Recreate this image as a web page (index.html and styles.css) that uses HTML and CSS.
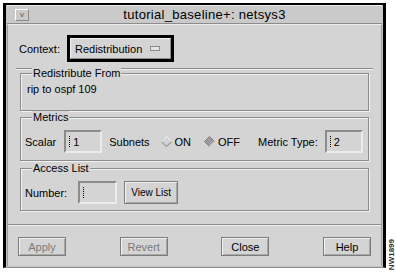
FILE: index.html
```html
<!DOCTYPE html>
<html>
    <head>
        <meta charset="utf-8" />
        <title>tutorial_baseline+: netsys3</title>
        <link rel="stylesheet" href="styles.css">
    </head>
    <body>
        <div class="screen">
            <div class="window">
                <div class="titlebar">
                    <span class="menu-btn">v</span>
                    <span class="title">tutorial_baseline+: netsys3</span>
                </div>
                <div class="panel">
                    <div class="context-row">
                        <span class="context-label">Context:</span>
                        <div class="option-frame">
                            <div class="option-btn">Redistribution <span class="indicator"></span></div>
                        </div>
                    </div>
                    <div class="sep sep-inset"></div>

                    <div class="group group-redist">
                        <span class="group-title">Redistribute From</span>
                        <div class="redist-text">rip to ospf 109</div>
                    </div>

                    <div class="group group-metrics">
                        <span class="group-title">Metrics</span>
                        <div class="row">
                            <span class="lbl">Scalar</span>
                            <span class="field field-scalar"><i class="caret"></i>1</span>
                            <span class="lbl lbl-subnets">Subnets</span>
                            <span class="radio">
                                <svg width="11" height="11" viewBox="0 0 11 11"><polygon points="5.5,0.5 10.5,5.5 5.5,10.5 0.5,5.5" fill="#d4d4d4" stroke="#a8a8a8" stroke-width="1.6"/><polyline points="0.5,5.5 5.5,0.5 10.5,5.5" fill="none" stroke="#f4f4f4" stroke-width="1.2"/></svg>
                                ON
                            </span>
                            <span class="radio radio-off">
                                <svg width="11" height="11" viewBox="0 0 11 11"><polygon points="5.5,0.5 10.5,5.5 5.5,10.5 0.5,5.5" fill="#9a9a9a" stroke="#7c7c7c" stroke-width="1"/><polyline points="5.5,10.5 10.5,5.5" fill="none" stroke="#c8c8c8" stroke-width="1.2"/></svg>
                                OFF
                            </span>
                            <span class="lbl lbl-metric">Metric Type:</span>
                            <span class="field field-metric"><i class="caret"></i>2</span>
                        </div>
                    </div>

                    <div class="group group-access">
                        <span class="group-title">Access List</span>
                        <div class="row">
                            <span class="lbl">Number:</span>
                            <span class="field field-number"><i class="caret"></i></span>
                            <span class="btn btn-view">View List</span>
                        </div>
                    </div>

                    <div class="sep sep-full"></div>

                    <div class="actions">
                        <span class="btn btn-action disabled">Apply</span>
                        <span class="btn btn-action disabled">Revert</span>
                        <span class="btn btn-action">Close</span>
                        <span class="btn btn-action">Help</span>
                    </div>
                </div>
            </div>
            <div class="side">
                <span class="tag">NW1899</span>
            </div>
        </div>
    </body>
</html>
```

FILE: styles.css
```css
html,
body {
    margin: 0;
    background-color: #ffffff;
    font-family: "Liberation Sans", Arial, sans-serif;
    font-size: 11px;
    color: #000000;
}
.screen {
    display: flex;
    width: 396px;
    height: 272px;
}
.window {
    margin: 3px 0 0 3px;
    width: 375px;
    height: 261px;
    padding: 0 1px 1px 1px;
    border-top: 2px solid #000000;
    border-left: 3px solid #000000;
    border-right: 3px solid #000000;
    border-bottom: 1px solid #8c8c8c;
    background-color: #c4c4c4;
    display: flex;
    flex-direction: column;
}
.titlebar {
    height: 17px;
    display: flex;
    align-items: center;
    padding-left: 8px;
    background-color: #cacaca;
    border-top: 1px solid #eeeeee;
    border-bottom: 1px solid #8c8c8c;
}
.menu-btn {
    width: 12px;
    height: 10px;
    border: 1px solid #ffffff;
    border-right-color: #8c8c8c;
    border-bottom-color: #8c8c8c;
    font-size: 8px;
    line-height: 9px;
    text-align: center;
    color: #555555;
}
.title {
    flex: 1;
    text-align: center;
    font-size: 13px;
    letter-spacing: 0.3px;
    padding-right: 2px;
}
.panel {
    flex: 1;
    background-color: #d4d4d4;
    border-top: 1px solid #eeeeee;
    border-left: 1px solid #9c9c9c;
    border-right: 1px solid #9c9c9c;
    display: flex;
    flex-direction: column;
}
.context-row {
    display: flex;
    align-items: center;
    margin-top: 10px;
    padding-left: 11px;
}
.context-label {
    width: 48px;
}
.option-frame {
    border: 3px solid #000000;
    padding: 0;
}
.option-btn {
    width: 95px;
    height: 19px;
    display: flex;
    align-items: center;
    padding-left: 4px;
    border: 1px solid #f2f2f2;
    border-right-color: #8c8c8c;
    border-bottom-color: #8c8c8c;
}
.indicator {
    width: 8px;
    height: 3px;
    margin-left: 8px;
    background-color: #e4e4e4;
    border: 1px solid #8c8c8c;
}
.sep {
    height: 0;
    border-top: 1px solid #8c8c8c;
    border-bottom: 1px solid #f2f2f2;
}
.sep-inset {
    margin: 6px 8px 0 8px;
}
.sep-full {
    margin-top: 13px;
}
.group {
    margin: 0 12px 0 12px;
    border: 1px solid #8c8c8c;
    box-shadow: inset 1px 1px #f2f2f2, 1px 1px #f2f2f2;
    padding: 0 4px;
}
.group-title {
    display: block;
    width: fit-content;
    margin: -7px 0 0 7px;
    padding: 0 1px;
    line-height: 12px;
    background-color: #d4d4d4;
}
.group-redist {
    margin-top: 3px;
    height: 36px;
}
.redist-text {
    margin-top: 4px;
    padding-left: 2px;
}
.group-metrics {
    margin-top: 6px;
    height: 42px;
}
.group-access {
    margin-top: 7px;
    height: 41px;
}
.row {
    display: flex;
    align-items: center;
    margin-top: 7px;
    height: 23px;
}
.field {
    box-sizing: border-box;
    height: 23px;
    display: flex;
    align-items: center;
    padding-left: 3px;
    border: 2px solid #8c8c8c;
    border-right-color: #ececec;
    border-bottom-color: #ececec;
}
.caret {
    display: inline-block;
    width: 3px;
    height: 11px;
    border-left: 1px dotted #000000;
}
.field-scalar {
    width: 38px;
    margin-left: 8px;
}
.field-metric {
    width: 38px;
    margin-left: 7px;
}
.field-number {
    width: 39px;
    margin-left: 11px;
}
.lbl-subnets {
    margin-left: 7px;
}
.radio {
    display: flex;
    align-items: center;
    gap: 3px;
    margin-left: 11px;
}
.radio-off {
    margin-left: 13px;
}
.lbl-metric {
    margin-left: 18px;
}
.btn {
    box-sizing: border-box;
    display: flex;
    align-items: center;
    justify-content: center;
    border: 1px solid #7c7c7c;
    box-shadow: inset 1px 1px #f2f2f2, inset -1px -1px #a8a8a8;
}
.btn-view {
    width: 54px;
    height: 23px;
    margin-left: 7px;
    font-size: 10px;
}
.actions {
    display: flex;
    justify-content: space-between;
    margin-top: 11px;
    padding: 0 10px;
}
.btn-action {
    width: 48px;
    height: 19px;
}
.disabled {
    color: #7a7a7a;
}
.side {
    flex: 1;
    display: flex;
    justify-content: center;
    align-items: flex-end;
    padding-bottom: 2px;
}
.tag {
    writing-mode: vertical-rl;
    transform: rotate(180deg);
    font-size: 8px;
    font-weight: bold;
    color: #333333;
}
```
